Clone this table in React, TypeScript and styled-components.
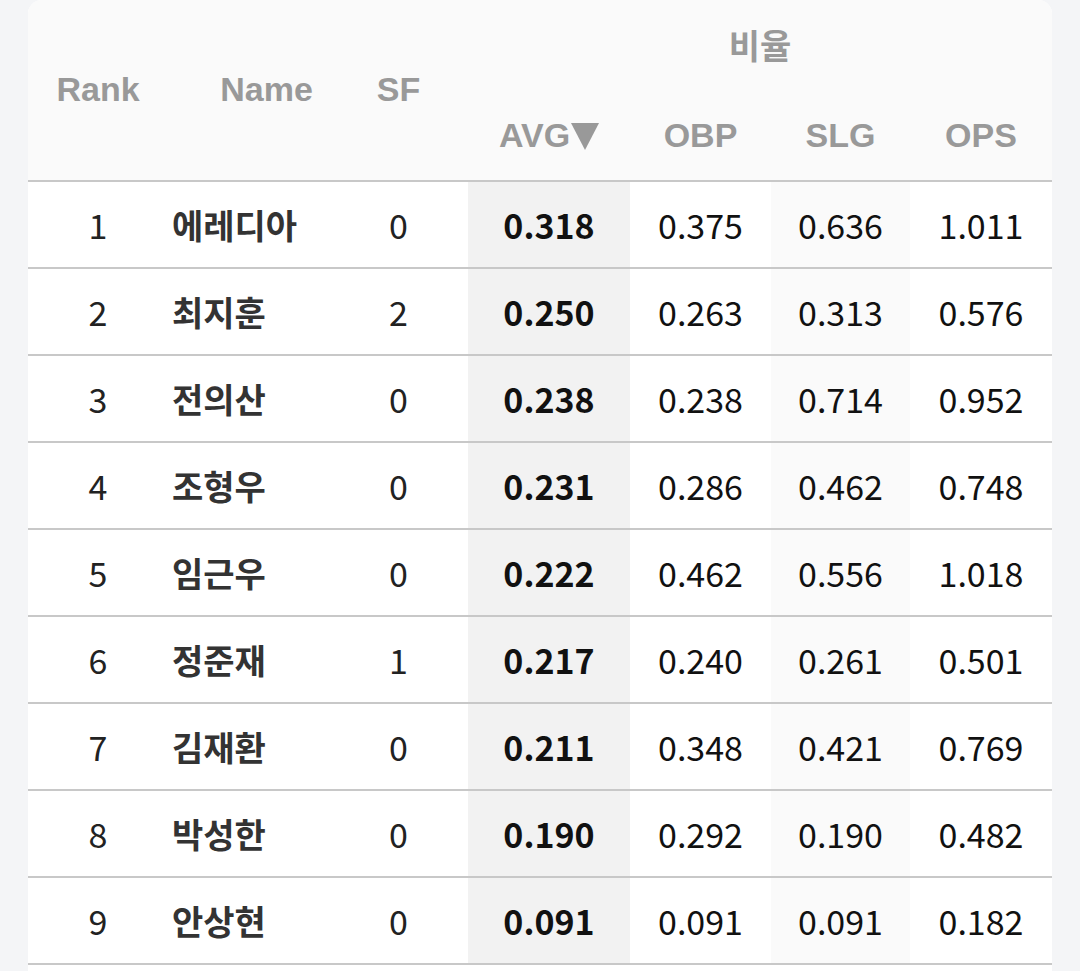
import React from "react";
import styled, { createGlobalStyle } from "styled-components";

const Global = createGlobalStyle`
  html, body { margin: 0; padding: 0; background: #f4f5f7; }
  #root { min-height: 100vh; }
`;

const Page = styled.div`
  padding: 0 28px;
`;

const Card = styled.div`
  background: #ffffff;
  border-radius: 14px 14px 0 0;
  overflow: hidden;
  padding-bottom: 30px;
`;

const Table = styled.table`
  width: 1024px;
  border-collapse: separate;
  border-spacing: 0;
  table-layout: fixed;
`;

const Head = styled.thead`
  background: #fafafa;
`;

const Th = styled.th<{ $row?: 1 | 2; $padL?: number; $padR?: number; $bottom?: boolean }>`
  font-family: "Liberation Sans", Arial, sans-serif;
  font-weight: 700;
  font-size: 34px;
  line-height: 1.15;
  color: #999999;
  text-align: center;
  vertical-align: middle;
  padding: 0 ${(p) => p.$padR ?? 0}px 0 ${(p) => p.$padL ?? 0}px;
  height: ${(p) => (p.$row === 1 ? 92 : 90)}px;
  box-sizing: border-box;
  border-bottom: ${(p) => (p.$bottom ? "2px solid #c8c8c8" : "none")};
`;

const GroupTh = styled(Th)`
  font-family: "Noto Sans CJK KR", "Noto Sans", sans-serif;
  font-size: 34px;
  padding-bottom: 2px;
`;

const Arrow = styled.svg`
  display: inline-block;
  width: 28px;
  height: 27px;
  margin-left: 1px;
  vertical-align: -3px;
`;

const Td = styled.td<{ $bg?: string; $padL?: number; $padR?: number; $align?: string; $bold?: boolean; $color?: string }>`
  font-family: "Noto Sans CJK KR", "Noto Sans", sans-serif;
  font-size: 34px;
  line-height: 1.2;
  font-weight: ${(p) => (p.$bold ? 700 : 400)};
  color: ${(p) => p.$color ?? "#111111"};
  background: ${(p) => p.$bg ?? "#ffffff"};
  text-align: ${(p) => p.$align ?? "center"};
  vertical-align: middle;
  height: 87px;
  box-sizing: border-box;
  padding: 2px ${(p) => p.$padR ?? 0}px 0 ${(p) => p.$padL ?? 0}px;
  border-bottom: 2px solid #c8c8c8;
  font-variant-numeric: tabular-nums;
`;

type Row = [string, string, string, string, string, string, string];

const rows: Row[] = [
  ["1", "에레디아", "0", "0.318", "0.375", "0.636", "1.011"],
  ["2", "최지훈", "2", "0.250", "0.263", "0.313", "0.576"],
  ["3", "전의산", "0", "0.238", "0.238", "0.714", "0.952"],
  ["4", "조형우", "0", "0.231", "0.286", "0.462", "0.748"],
  ["5", "임근우", "0", "0.222", "0.462", "0.556", "1.018"],
  ["6", "정준재", "1", "0.217", "0.240", "0.261", "0.501"],
  ["7", "김재환", "0", "0.211", "0.348", "0.421", "0.769"],
  ["8", "박성한", "0", "0.190", "0.292", "0.190", "0.482"],
  ["9", "안상현", "0", "0.091", "0.091", "0.091", "0.182"],
];

export default function App() {
  return (
    <Page>
      <Global />
      <Card>
        <Table>
          <colgroup>
            <col style={{ width: 140 }} />
            <col style={{ width: 187 }} />
            <col style={{ width: 113 }} />
            <col style={{ width: 162 }} />
            <col style={{ width: 141 }} />
            <col style={{ width: 139 }} />
            <col style={{ width: 142 }} />
          </colgroup>
          <Head>
            <tr>
              <Th $row={1} rowSpan={2} $bottom>Rank</Th>
              <Th $row={1} rowSpan={2} $bottom $padL={10}>Name</Th>
              <Th $row={1} rowSpan={2} $bottom $padR={26}>SF</Th>
              <GroupTh $row={1} colSpan={4}>비율</GroupTh>
            </tr>
            <tr>
              <Th $row={2} $bottom>
                AVG
                <Arrow viewBox="0 0 28 27" aria-hidden="true">
                  <polygon points="0,0 28,0 14,27" fill="#999999" />
                </Arrow>
              </Th>
              <Th $row={2} $bottom>OBP</Th>
              <Th $row={2} $bottom>SLG</Th>
              <Th $row={2} $bottom>OPS</Th>
            </tr>
          </Head>
          <tbody>
            {rows.map((r) => (
              <tr key={r[0]}>
                <Td $color="#222222">{r[0]}</Td>
                <Td $align="left" $padL={4} $bold $color="#333333">{r[1]}</Td>
                <Td $padR={26} $color="#222222">{r[2]}</Td>
                <Td $bg="#f2f2f2" $bold>{r[3]}</Td>
                <Td>{r[4]}</Td>
                <Td $bg="#fafafa">{r[5]}</Td>
                <Td>{r[6]}</Td>
              </tr>
            ))}
          </tbody>
        </Table>
      </Card>
    </Page>
  );
}
